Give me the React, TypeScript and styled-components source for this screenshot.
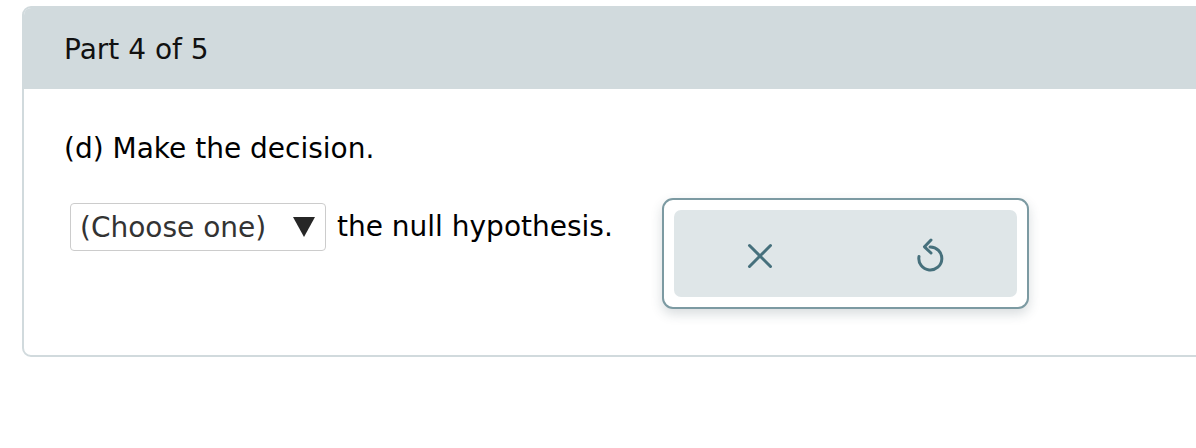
import styled, { createGlobalStyle } from 'styled-components';

const GlobalStyle = createGlobalStyle`
  *, *::before, *::after {
    box-sizing: border-box;
  }

  body {
    margin: 0;
    background: #ffffff;
    font-family: 'DejaVu Sans', Verdana, sans-serif;
    color: #000000;
  }
`;

const ICON = '#46707c';

const AnswerTools = () => {
  return (
    <ToolFrame>
      <ToolPanel>
        <ToolButton aria-label="Clear">
          <svg width="26" height="26" viewBox="0 0 26 26" fill="none">
            <path
              d="M2.5 2.5 L23.5 23.5 M23.5 2.5 L2.5 23.5"
              stroke={ICON}
              strokeWidth="3"
              strokeLinecap="round"
            />
          </svg>
        </ToolButton>
        <ToolButton aria-label="Undo">
          <svg width="28" height="36" viewBox="0 0 28 36" fill="none">
            <path
              d="M13 9 A11.5 11.5 0 1 1 2 18.5"
              stroke={ICON}
              strokeWidth="3"
              strokeLinecap="round"
            />
            <path
              d="M14 2 L7.5 8.8 L14 15"
              stroke={ICON}
              strokeWidth="3"
              strokeLinecap="round"
              strokeLinejoin="round"
            />
          </svg>
        </ToolButton>
      </ToolPanel>
    </ToolFrame>
  );
};

const App = () => {
  return (
    <>
      <GlobalStyle />
      <Card>
        <Header>Part 4 of 5</Header>
        <Body>
          <Prompt>(d) Make the decision.</Prompt>
          <AnswerRow>
            <Sentence>
              <SelectBox type="button">
                <span>(Choose one)</span>
                <Caret />
              </SelectBox>
              <span>the null hypothesis.</span>
            </Sentence>
            <AnswerTools />
          </AnswerRow>
        </Body>
      </Card>
    </>
  );
};

const Card = styled.section`
  width: 1200px;
  margin: 6px 0 0 22px;
  border: 2px solid #d1dadd;
  border-radius: 9px;
  overflow: hidden;
`;

const Header = styled.header`
  display: flex;
  align-items: center;

  height: 81px;
  padding: 2px 0 0 40px;

  background: #d1dadd;
  font-size: 28px;
  color: #111111;
`;

const Body = styled.div`
  height: 266px;
  padding: 43px 0 0 40px;
`;

const Prompt = styled.p`
  margin: 0;

  font-size: 28px;
  line-height: 34px;
`;

const AnswerRow = styled.div`
  display: flex;
  align-items: flex-start;
  gap: 49px;

  margin-top: 32px;
`;

const Sentence = styled.div`
  display: flex;
  align-items: center;
  gap: 11px;

  margin: 5px 0 0 6px;
  font-size: 28px;
  line-height: 34px;
`;

const SelectBox = styled.button`
  display: flex;
  align-items: center;
  justify-content: space-between;

  width: 256px;
  height: 48px;
  padding: 0 9px 0 9px;

  background: #ffffff;
  border: 1px solid #cccccc;
  border-radius: 4px;
  font-family: inherit;
  font-size: 28px;
  color: #333333;
`;

const Caret = styled.span`
  width: 0;
  height: 0;
  margin-right: 1px;

  border-left: 11px solid transparent;
  border-right: 11px solid transparent;
  border-top: 20px solid #262626;
`;

const ToolFrame = styled.div`
  width: 367px;
  height: 111px;
  padding: 10px;

  background: #ffffff;
  border: 2px solid #7c9aa2;
  border-radius: 11px;
  box-shadow: 0 5px 12px rgba(40, 60, 70, 0.18);
`;

const ToolPanel = styled.div`
  display: grid;
  grid-template-columns: 1fr 1fr;

  height: 100%;

  background: #dfe6e8;
  border-radius: 7px;
`;

const ToolButton = styled.button`
  display: flex;
  align-items: center;
  justify-content: center;

  padding: 5px 0 0;

  background: none;
  border: none;
`;

export default App;
